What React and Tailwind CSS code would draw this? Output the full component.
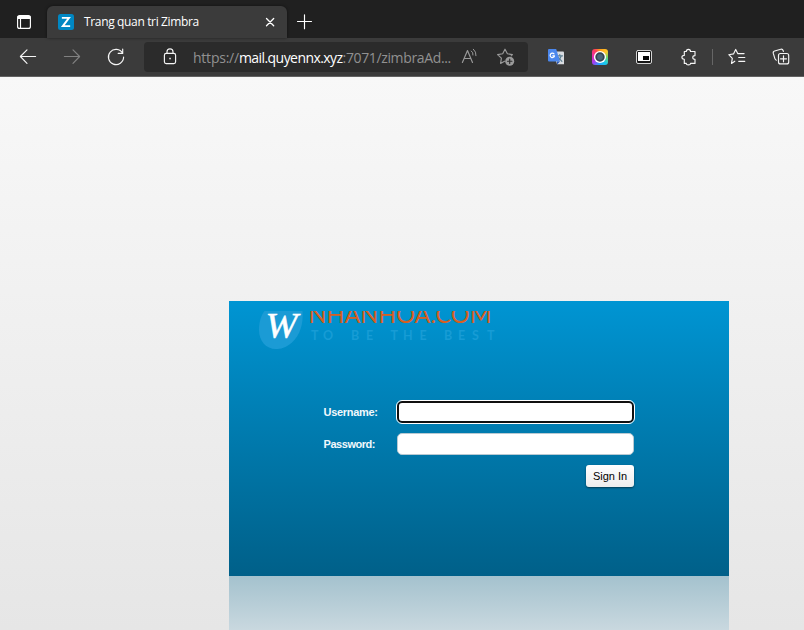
import React from "react";

function Icon({ children, className = "", size = 20 }) {
  return (
    <svg
      width={size}
      height={size}
      viewBox={`0 0 ${size} ${size}`}
      fill="none"
      stroke="currentColor"
      strokeWidth="1.15"
      strokeLinecap="round"
      strokeLinejoin="round"
      className={`shrink-0 ${className}`}
    >
      {children}
    </svg>
  );
}

function ToolButton({ children, label, className = "text-[#f5f5f5]" }) {
  return (
    <button aria-label={label} className={`flex h-[38px] w-11 shrink-0 items-center justify-center ${className}`}>
      {children}
    </button>
  );
}

function TabStrip() {
  return (
    <div className="flex h-[38px] items-end bg-[#202020]">
      <div className="flex h-full w-[47px] items-center justify-center pt-[6px] text-white">
        <Icon size={16}>
          <rect x="1.6" y="1.6" width="12.8" height="12.8" rx="2" />
          <path d="M2 2.6h12v1.8H2z" fill="currentColor" />
          <path d="M4.5 5v9" />
        </Icon>
      </div>
      <div className="flex h-8 w-60 items-center rounded-t-[6px] bg-[#3b3b3b] pl-[11px] pr-[10px] text-white shadow-[0_0_3px_rgba(0,0,0,0.5)]">
        <Icon size={16}>
          <rect width="16" height="16" rx="2.5" fill="#0087c3" stroke="none" />
          <path d="M4.8 3.9h6.2L4.8 12.1h6.4" stroke="#fff" strokeWidth="1.9" strokeLinecap="square" strokeLinejoin="miter" />
        </Icon>
        <span className="ml-[10px] whitespace-nowrap font-['Open_Sans','Noto_Sans',sans-serif] text-[12px] tracking-[-0.35px]">
          Trang quan tri Zimbra
        </span>
        <Icon size={14} className="ml-auto">
          <path d="M3.5 3.5l7.2 7.2M10.7 3.5l-7.2 7.2" strokeWidth="1.3" />
        </Icon>
      </div>
      <div className="flex h-8 w-[35px] items-center justify-center text-white">
        <Icon size={17}>
          <path d="M1.5 7.5h14M8.5 0.7v14" />
        </Icon>
      </div>
    </div>
  );
}

function Toolbar() {
  return (
    <div className="flex h-[39px] items-start border-b border-[#626262] bg-[#3b3b3b] pl-[6px]">
      <ToolButton label="Back">
        <Icon><path d="M17.6 9.5H2.4M9 2.8L2.4 9.5l6.6 6.9" /></Icon>
      </ToolButton>
      <ToolButton label="Forward" className="text-[#818181]">
        <Icon><path d="M2.4 9.5h15.2M11 2.8l6.6 6.7-6.6 6.9" /></Icon>
      </ToolButton>
      <ToolButton label="Refresh">
        <Icon><path d="M16.6 6.2A7.6 7.6 0 1 0 17.6 10M16.7 2v4.4h-4.5" /></Icon>
      </ToolButton>
      <div className="ml-[6px] mr-[6px] mt-1 flex h-[30px] w-96 items-center rounded-[4px] bg-[#2b2b2b]">
        <Icon className="ml-4 text-[#f5f5f5]">
          <rect x="4.4" y="6.4" width="11.2" height="10.2" rx="1.8" />
          <path d="M7 6.4V4.8a3 3 0 0 1 6 0v1.6" />
          <rect x="9.3" y="10.8" width="1.5" height="1.5" fill="currentColor" stroke="none" />
        </Icon>
        <div className="ml-[13px] w-[262px] whitespace-nowrap font-['Open_Sans','Noto_Sans',sans-serif] text-[14px] text-[#919191]">
          <span className="tracking-[-0.23px]">https://</span>
          <span className="tracking-[-0.56px] text-white">mail.quyennx.xyz</span>
          <span className="tracking-[-0.36px]">:7071/zimbraAd...</span>
        </div>
        <Icon className="ml-[5px] text-[#9a9a9a]">
          <path d="M2.4 15.5L7.5 3.5l5 12M4.2 11.5h6.5" />
          <path d="M11.3 4a4 4 0 0 1 1.7 4M13.4 2.2a7.5 7.5 0 0 1 2.6 6.5" strokeWidth="1" />
        </Icon>
        <Icon className="ml-4 text-[#9a9a9a]">
          <path d="M8.5 14.2L4.6 16.4l.8-5.2L1.6 7.6l5.1-.8L9 2.2l2.4 4.6 5 .8-1.2 1.2" />
          <circle cx="13.7" cy="14.2" r="4.5" fill="currentColor" stroke="none" />
          <path d="M11.5 14.2h4.4M13.7 12v4.4" stroke="#2b2b2b" />
        </Icon>
      </div>
      <ToolButton label="Translate">
        <Icon>
          <path d="M7 4.5h10a1 1 0 0 1 1 1v11.7h-7z" fill="#d9dce1" stroke="none" />
          <path d="M11 8.8h5.5M13.8 7.6v1.2M15.3 8.8c-.5 2-2 3.7-3.5 4.6M12.4 10.5l3.5 3.8" stroke="#5d7f91" />
          <path d="M3 2h7.2L14 14.5H3a1 1 0 0 1-1-1V3a1 1 0 0 1 1-1z" fill="#4b87ed" stroke="none" />
          <path d="M11 14.5h3L11 17.5z" fill="#2855b0" stroke="none" />
          <path d="M8 6.9a2.2 2.2 0 1 0 .5 1.9H6.8" stroke="#fff" strokeWidth="1.2" />
        </Icon>
      </ToolButton>
      <ToolButton label="Screen capture">
        <span className="flex h-4 w-4 items-center justify-center rounded-[3px] bg-[conic-gradient(#ff9d16,#ffc72b_50deg,#74d868_90deg,#16c8ed_140deg,#279dff_190deg,#a33df0_230deg,#ef2ba8_280deg,#ff4058_325deg,#ff9d16)]">
          <Icon size={14}>
            <circle cx="7" cy="7" r="6.1" fill="#fff" stroke="none" />
            <circle cx="7" cy="7" r="3.8" fill="#4a6577" stroke="#34434f" strokeWidth="1.8" />
          </Icon>
        </span>
      </ToolButton>
      <ToolButton label="Picture in picture">
        <Icon>
          <rect x="2.5" y="3.5" width="15" height="13" rx="1.5" fill="#171717" stroke="#d5d5d5" strokeWidth="1" />
          <rect x="4" y="5" width="12" height="9" fill="#fff" stroke="none" />
          <rect x="9" y="9" width="6" height="4" fill="#050505" stroke="none" />
        </Icon>
      </ToolButton>
      <ToolButton label="Extensions">
        <Icon>
          <path d="M6.3 4.5h2c0-2.9 4.2-2.9 4.2 0H17v4.1c-3 0-3 3.8 0 3.8v4h-4.5c0 1.9-4.2 1.9-4.2 0h-2v-4.1c-3.2 0-3.2-3.9 0-3.9z" />
        </Icon>
      </ToolButton>
      <div className="ml-[2px] mr-[2px] mt-[11px] h-4 w-px bg-[#666]" />
      <ToolButton label="Favorites">
        <Icon>
          <path d="M7.8 14.2L4.5 16.4l.8-5L1.8 7.7l4.7-.8L8.7 2.4l2 4.2h6.4M11.7 10.5h6.1M11.7 14.3h6.1" />
        </Icon>
      </ToolButton>
      <ToolButton label="Collections">
        <Icon>
          <rect x="7.5" y="6.5" width="10.2" height="10.4" rx="2" />
          <path d="M12.5 8.8v6M9.5 11.8h6" />
          <path d="M5.4 13.2c-.8-.2-1.200-.8-1.500-1.600L2.300 6.400c-.3-1.200.2-2.100 1.300-2.400l6.200-1.700c1.100-.3 1.900.1 2.300 1.200l.3.900" />
        </Icon>
      </ToolButton>
    </div>
  );
}

function Logo() {
  return (
    <svg width="240" height="42" viewBox="0 0 240 42" className="ml-[29px] mt-[9px] block overflow-hidden">
      <path d="M6.500 1H44.500C45.500 14 42 25 34 32.500 28 38 22 39 18 39 8 39 1 31 1 20 1 12 3 5.500 6.500 1z" fill="#1b9bd5" />
      <text x="7.500" y="28" textLength="32" lengthAdjust="spacingAndGlyphs" fill="#fff" stroke="#fff" strokeWidth="0.5" fontFamily="Liberation Serif, serif" fontStyle="italic" fontSize="36">W</text>
      <svg x="50" y="1" width="188" height="18" overflow="hidden">
        <text x="0.500" y="12" textLength="183" lengthAdjust="spacingAndGlyphs" fill="#d65f22" fontFamily="Lato, sans-serif" fontSize="24">NHANHOA.COM</text>
      </svg>
      <text
        x="53 65 76 93 108 118 132.5 145 161.5 172 186 200 214 229"
        y="30"
        fill="#179cd5"
        fontFamily="Lato, sans-serif"
        fontSize="12.5"
        fontWeight="bold"
      >
        TO BE THE BEST
      </text>
    </svg>
  );
}

function LoginPanel() {
  return (
    <div className="ml-[229px] w-[500px]">
      <div className="flex h-[275px] flex-col bg-linear-to-b from-[#0095d3] to-[#006089] font-['Liberation_Sans',Arial,sans-serif]">
        <Logo />
        <form className="ml-[94px] mt-[49px] flex w-[312px] flex-col" onSubmit={(e) => e.preventDefault()}>
          <div className="flex h-[22px] items-center">
            <label htmlFor="user" className="w-[74px] pl-[0.5px] text-[11px] font-bold tracking-[-0.3px] text-[#f0f8fc]">Username:</label>
            <input id="user" className="h-[22px] w-[237px] rounded-[5px] border-2 border-[#101010] bg-white outline-1 outline-white" />
          </div>
          <div className="mt-[10px] flex h-[22px] items-center">
            <label htmlFor="password" className="w-[74px] pl-[0.5px] text-[11px] font-bold tracking-[-0.45px] text-[#f0f8fc]">Password:</label>
            <input id="password" type="password" className="h-[22px] w-[237px] rounded-[5px] border border-[#b8c9d2] bg-white" />
          </div>
          <button className="ml-auto mr-px mt-[10px] h-[22px] w-12 rounded-[3px] bg-linear-to-b from-white to-[#ececec] text-[11px] text-black shadow-[0_1px_2px_rgba(0,0,0,0.5)]">
            Sign In
          </button>
        </form>
      </div>
      <div className="h-[54px] bg-linear-to-b from-[#a4c2ce] to-[#c9d8df]" />
    </div>
  );
}

export default function App() {
  return (
    <div className="h-[630px] w-[804px] overflow-hidden">
      <TabStrip />
      <Toolbar />
      <main className="h-[553px] bg-linear-to-b from-[#f8f8f8] to-[#e6e6e6] pt-[224px]">
        <LoginPanel />
      </main>
    </div>
  );
}
